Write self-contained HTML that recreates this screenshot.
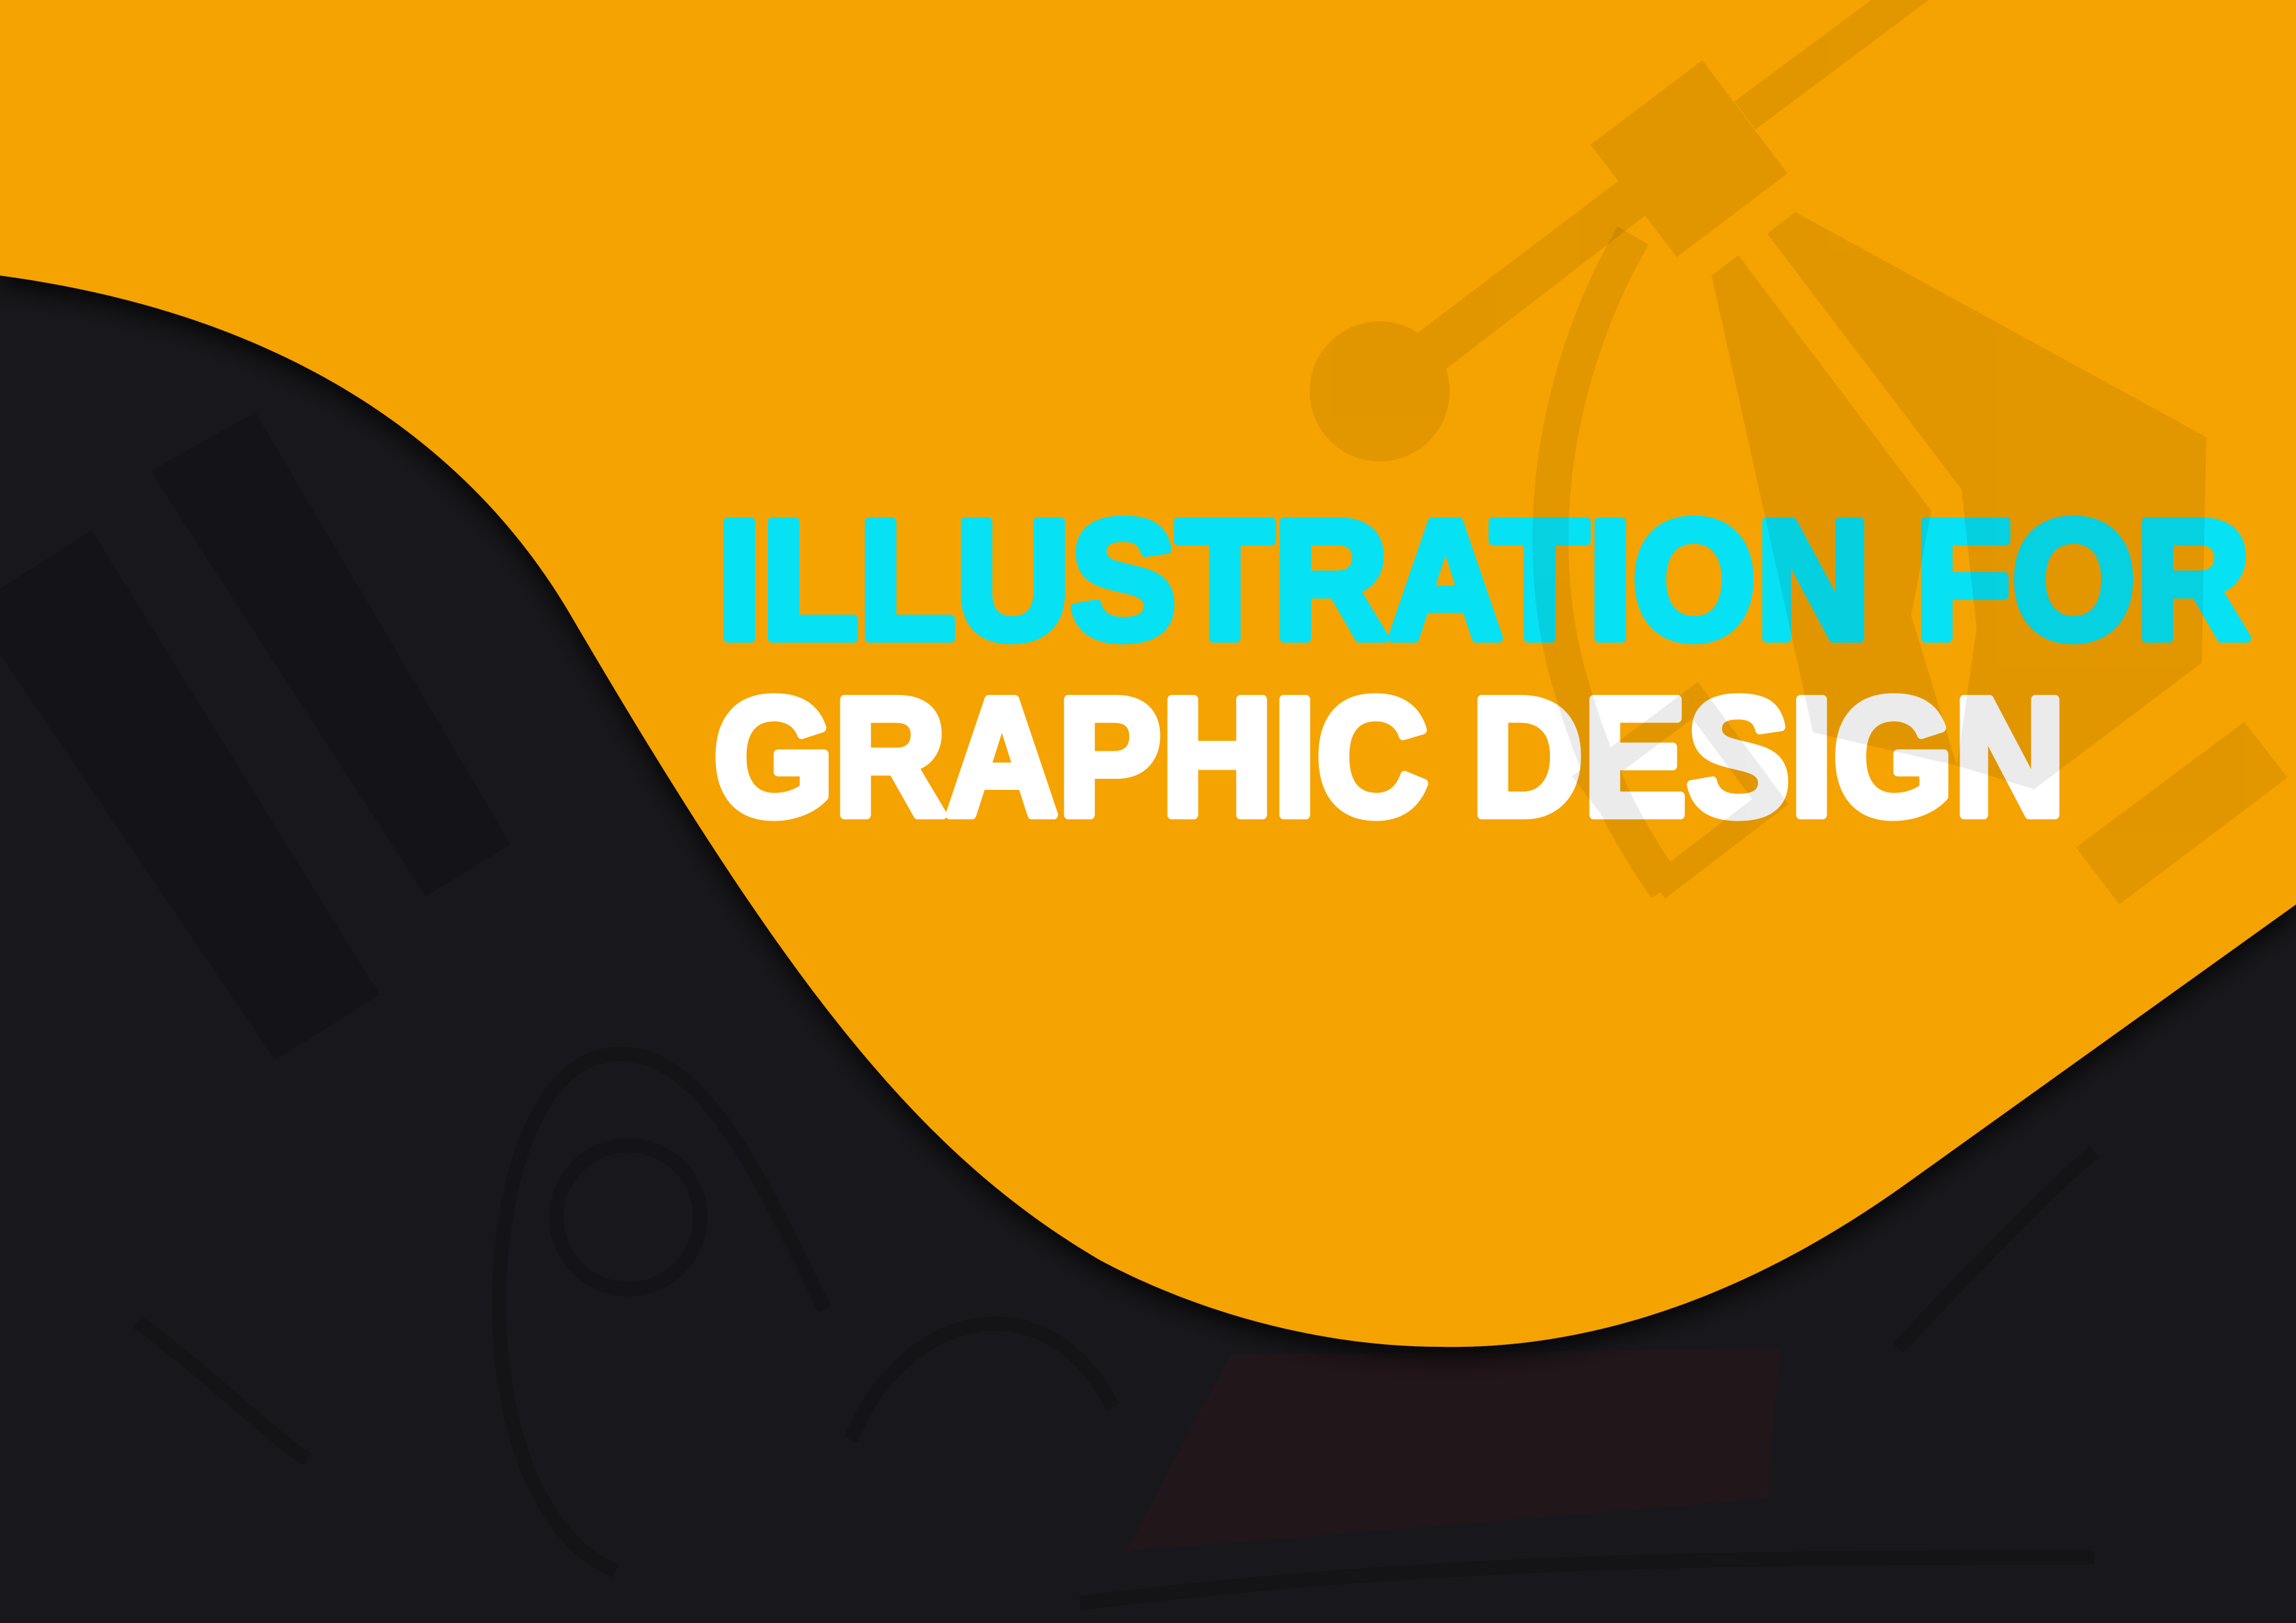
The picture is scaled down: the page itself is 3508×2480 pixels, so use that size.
<!DOCTYPE html>
<html><head><meta charset="utf-8"><style>
html,body{margin:0;padding:0;background:#18171b;}
svg{display:block}
</style></head><body>
<svg width="3508" height="2480" viewBox="0 0 3508 2480" xmlns="http://www.w3.org/2000/svg">
<defs>
<filter id="sh" x="-10%" y="-10%" width="120%" height="130%">
<feDropShadow dx="0" dy="14" stdDeviation="18" flood-color="#000" flood-opacity="0.8"/>
</filter>
</defs>
<rect width="3508" height="2480" fill="#18171b"/>
<g fill="#121115" opacity="0.6">
<polygon points="230,720 390,630 780,1290 650,1370"/>
<polygon points="0,900 140,810 580,1520 420,1620 0,1000"/>
</g>
<polygon points="1880,2070 2720,2060 2700,2290 1720,2370" fill="#21161a"/>
<g fill="none" stroke="#131216" stroke-width="22" opacity="0.6">
<path d="M940,2400 C700,2300 720,1700 900,1620 C1060,1560 1160,1800 1260,2000"/>
<circle cx="960" cy="1860" r="110"/>
<path d="M210,2020 C320,2100 420,2200 470,2230"/>
<path d="M2900,2060 C3050,1900 3150,1800 3200,1760"/>
<path d="M1650,2450 C2200,2380 2700,2380 3200,2380"/>
<path d="M1300,2200 C1380,2000 1600,1950 1700,2150"/>
</g>
<path filter="url(#sh)" fill="#f5a300" d="M0,0 H3508 V1382 L2908,1812 C2700,1960 2460,2062 2204,2058 C1990,2058 1800,1990 1678,1924 C1400,1760 1200,1500 872,940 C720,680 440,480 0,421 Z"/>
<g font-family="Liberation Sans, sans-serif" font-weight="bold" stroke-linejoin="round">
<text x="1096" y="975" font-size="258" fill="#06e2f3" stroke="#06e2f3" stroke-width="14" textLength="2342" lengthAdjust="spacingAndGlyphs">ILLUSTRATION FOR</text>
<text x="1090" y="1245" font-size="256" fill="#ffffff" stroke="#ffffff" stroke-width="14" textLength="2066" lengthAdjust="spacingAndGlyphs">GRAPHIC DESIGN</text>
</g>
<g fill="#000" opacity="0.075">
<circle cx="2108" cy="598" r="107"/>
<polygon points="2085,570 2600,180 2640,232 2130,625"/>
<polygon points="2601,92 2731,265 2562,393 2430,221"/>
<polygon points="2859,0 2947,0 2682,198 2650,155"/>
<polygon points="2700,357 2743,324 3371,668 3364,1013 3108,1206 2990,1170 3020,960 2997,748"/>
<polygon points="2615,421 2656,390 2951,781 2920,940 2990,1170 2770,1119"/>
<polygon points="3429,1103 3495,1188 3238,1382 3172,1295"/>
</g>
<g fill="none" stroke="#000" opacity="0.075">
<path d="M2495,360 C2380,560 2340,800 2390,1010 C2440,1200 2500,1290 2546,1357" stroke-width="55"/>
<polygon points="2430,1190 2590,1070 2705,1225 2548,1345" stroke-width="40"/>
</g>
</svg>
</body></html>
